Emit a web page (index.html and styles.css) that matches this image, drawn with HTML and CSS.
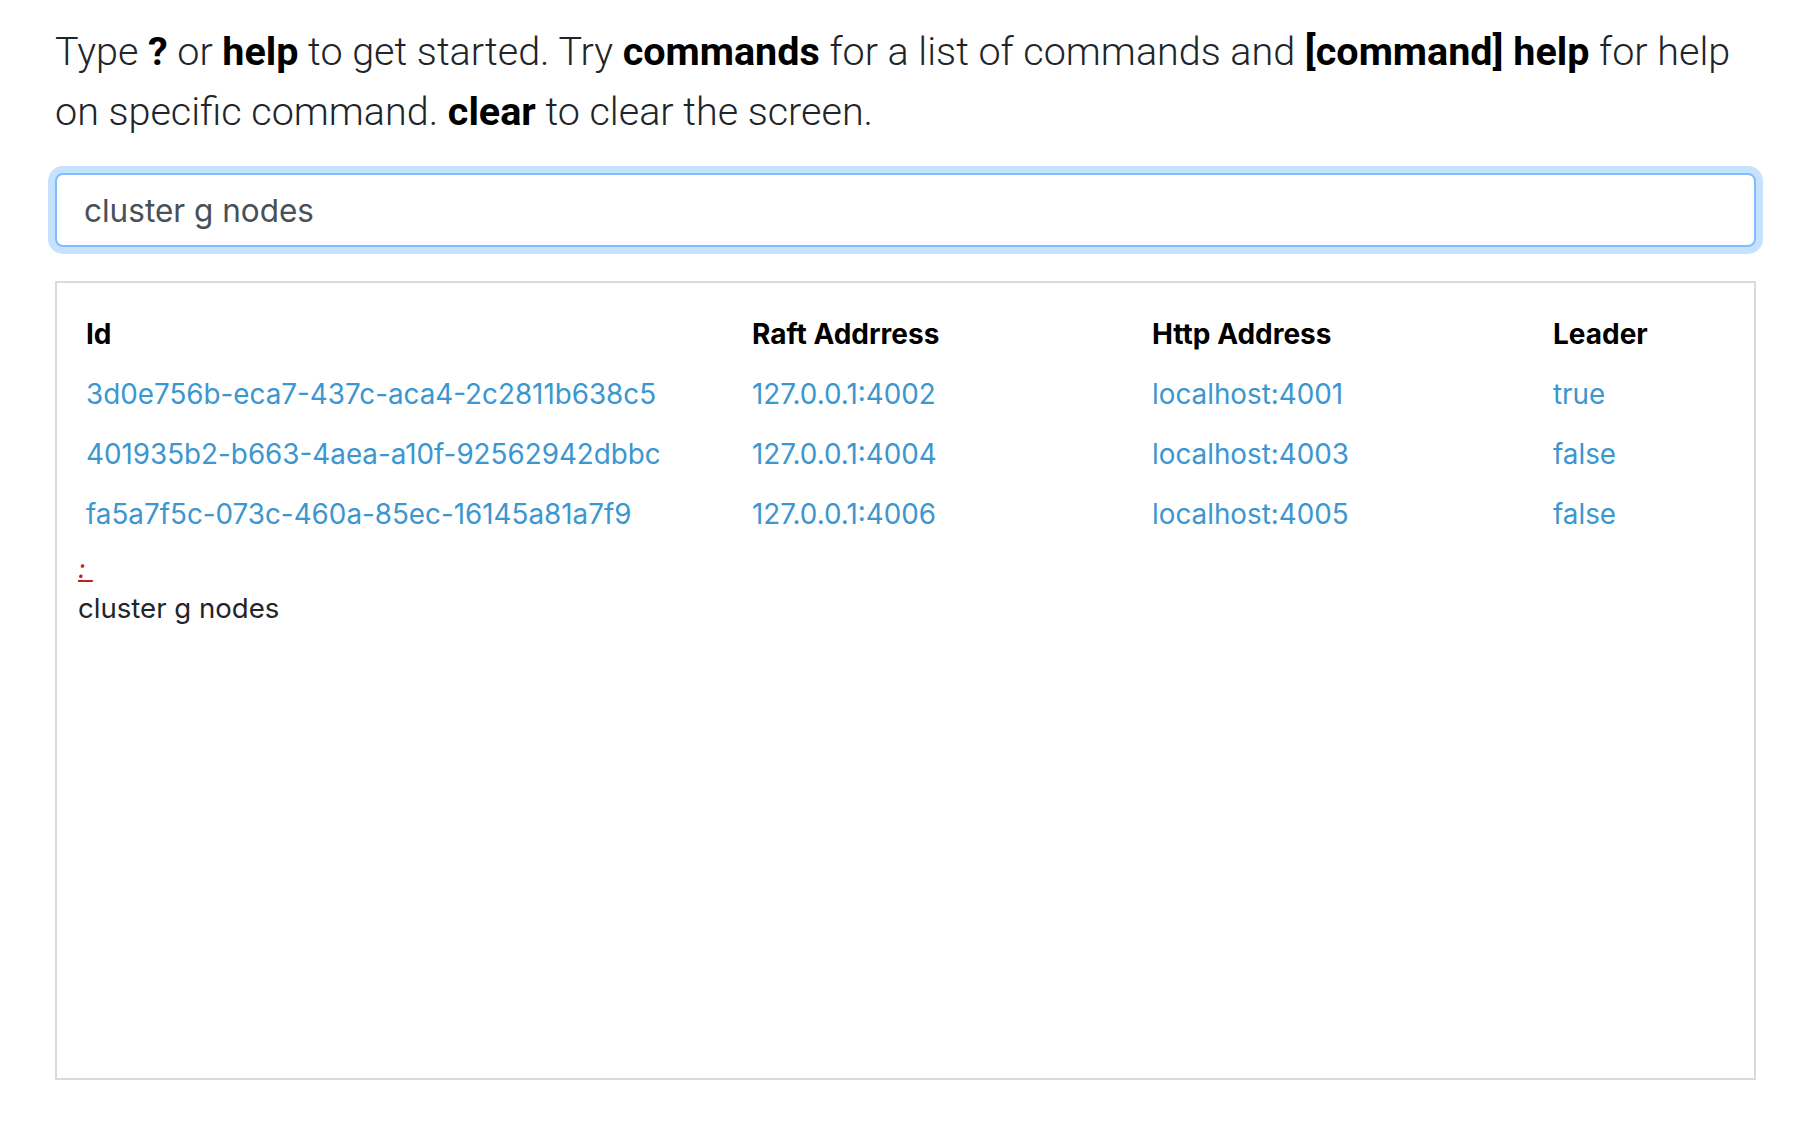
FILE: index.html
```html
<!DOCTYPE html>
<html lang="en">
<head>
<meta charset="utf-8">
<title>Console</title>
<link rel="stylesheet" href="styles.css">
</head>
<body>
<main class="page">
  <p class="lead">Type <b>?</b> or <b>help</b> to get started. Try <b>commands</b> for a list of commands and <b>[command] help</b> for help on specific command. <b>clear</b> to clear the screen.</p>
  <input class="cmd" type="text" value="cluster g nodes">
  <div class="output">
    <table class="nodes">
      <thead>
        <tr><th class="c1">Id</th><th class="c2">Raft Addrress</th><th class="c3">Http Address</th><th class="c4">Leader</th></tr>
      </thead>
      <tbody>
        <tr><td>3d0e756b-eca7-437c-aca4-2c2811b638c5</td><td>127.0.0.1:4002</td><td>localhost:4001</td><td>true</td></tr>
        <tr><td>401935b2-b663-4aea-a10f-92562942dbbc</td><td>127.0.0.1:4004</td><td>localhost:4003</td><td>false</td></tr>
        <tr><td>fa5a7f5c-073c-460a-85ec-16145a81a7f9</td><td>127.0.0.1:4006</td><td>localhost:4005</td><td>false</td></tr>
      </tbody>
    </table>
    <div class="prompt"><span class="mark">:&nbsp;</span></div>
    <div class="echo">cluster g nodes</div>
  </div>
</main>
</body>
</html>
```
FILE: styles.css
```css
* { box-sizing: border-box; }
html, body { margin: 0; padding: 0; background: #ffffff; }
body {
  font-family: Inter, "Open Sans", "Liberation Sans", sans-serif;
  color: #212529;
}
.page {
  width: 1701px;
  margin-left: 55px;
  padding-top: 22px;
  display: flex;
  flex-direction: column;
}
.lead {
  margin: 0;
  font-family: Roboto, Inter, "Liberation Sans", sans-serif;
  font-size: 39.5px;
  line-height: 60px;
  font-weight: 300;
  color: #212529;
}
.lead b { font-weight: 700; color: #000; }
.cmd {
  margin-top: 31px;
  width: 100%;
  height: 74px;
  padding: 0 27px;
  font-family: inherit;
  font-size: 31.5px;
  color: #495057;
  border: 2px solid #80bdff;
  border-radius: 8px;
  box-shadow: 0 0 0 7px rgba(0, 123, 255, 0.22);
  outline: none;
  background: #fff;
}
.output {
  margin-top: 34px;
  height: 799px;
  border: 2px solid #d9d9de;
  padding: 21px 20px 0 21px;
  font-size: 28px;
}
.nodes {
  border-collapse: collapse;
  width: 100%;
  table-layout: fixed;
}
.nodes th, .nodes td {
  padding: 9px 8px;
  line-height: 42px;
  text-align: left;
  white-space: nowrap;
}
.nodes th { font-weight: 700; color: #000; }
.nodes td { color: #3c96cf; font-size: 27.8px; }
.c1 { width: 666px; }
.c2 { width: 400px; }
.c3 { width: 401px; }
.prompt {
  margin-top: 4px;
  line-height: 40px;
  height: 40px;
}
.mark {
  color: #c0201e;
  font-style: italic;
  text-decoration: underline;
  font-size: 26px;
}
.echo {
  line-height: 40px;
  font-size: 27.6px;
  color: #212529;
}
```
